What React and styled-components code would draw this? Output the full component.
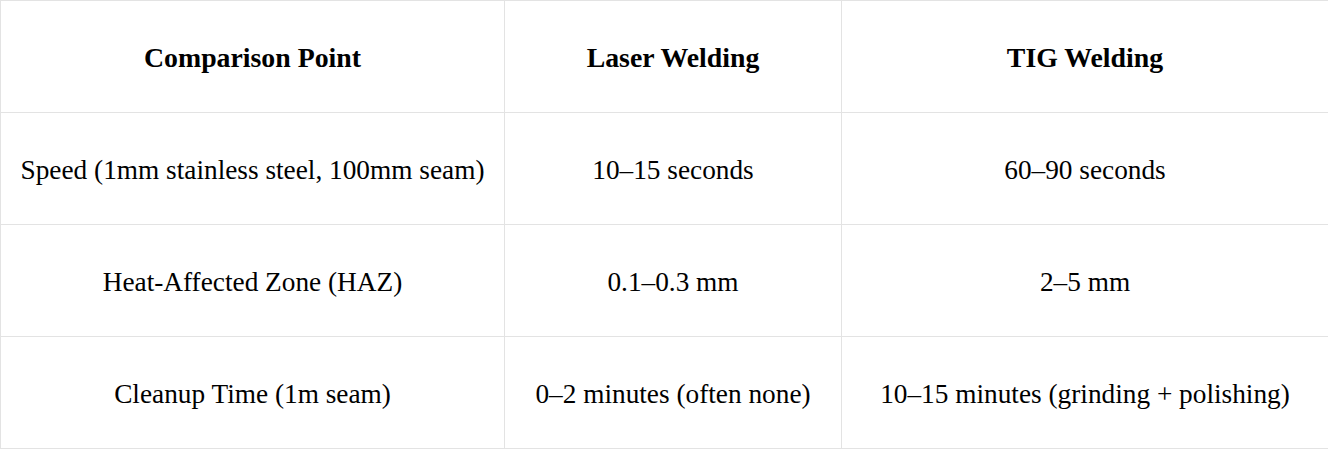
import styled, { createGlobalStyle } from "styled-components";

const GlobalStyle = createGlobalStyle`
  html, body {
    margin: 0;
    padding: 0;
    background: #ffffff;
  }
`;

const Table = styled.table`
  width: 1328px;
  border-collapse: collapse;
  table-layout: fixed;
  font-family: "Liberation Serif", "Times New Roman", serif;
  line-height: 32px;
  color: #000;
`;

const Col = styled.col`
  width: ${(p) => p.$w}px;
`;

const Cell = styled.td`
  height: 108px;
  padding: 3px 4px 0;
  border: 1px solid #e3e3e3;
  text-align: center;
  vertical-align: middle;
  font-size: ${(p) => (p.$head ? "27.8px" : "27.3px")};
  font-weight: ${(p) => (p.$head ? 700 : 400)};
  white-space: nowrap;
`;

const rows = [
  ["Speed (1mm stainless steel, 100mm seam)", "10–15 seconds", "60–90 seconds"],
  ["Heat-Affected Zone (HAZ)", "0.1–0.3 mm", "2–5 mm"],
  ["Cleanup Time (1m seam)", "0–2 minutes (often none)", "10–15 minutes (grinding + polishing)"],
];

export default function App() {
  return (
    <>
      <GlobalStyle />
      <Table>
        <colgroup>
          <Col $w={504} />
          <Col $w={337} />
          <Col $w={487} />
        </colgroup>
        <thead>
          <tr>
            <Cell as="th" $head>Comparison Point</Cell>
            <Cell as="th" $head>Laser Welding</Cell>
            <Cell as="th" $head>TIG Welding</Cell>
          </tr>
        </thead>
        <tbody>
          {rows.map((r) => (
            <tr key={r[0]}>
              {r.map((c) => (
                <Cell key={c}>{c}</Cell>
              ))}
            </tr>
          ))}
        </tbody>
      </Table>
    </>
  );
}
